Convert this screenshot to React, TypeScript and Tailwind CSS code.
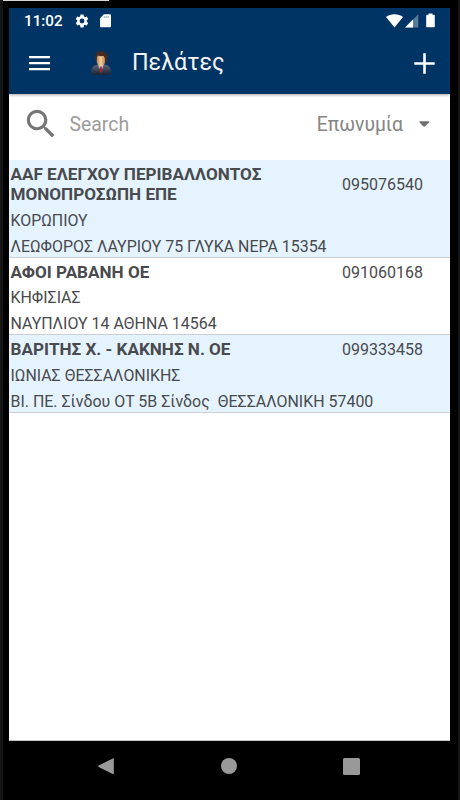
import type { ReactNode } from 'react';

type Customer = {
  name: string[];
  vat: string;
  taxOffice: string;
  address: string;
};

const customers: Customer[] = [
  {
    name: ['AAF ΕΛΕΓΧΟΥ ΠΕΡΙΒΑΛΛΟΝΤΟΣ', 'ΜΟΝΟΠΡΟΣΩΠΗ ΕΠΕ'],
    vat: '095076540',
    taxOffice: 'ΚΟΡΩΠΙΟΥ',
    address: 'ΛΕΩΦΟΡΟΣ ΛΑΥΡΙΟΥ 75 ΓΛΥΚΑ ΝΕΡΑ 15354',
  },
  {
    name: ['ΑΦΟΙ ΡΑΒΑΝΗ ΟΕ'],
    vat: '091060168',
    taxOffice: 'ΚΗΦΙΣΙΑΣ',
    address: 'ΝΑΥΠΛΙΟΥ 14 ΑΘΗΝΑ 14564',
  },
  {
    name: ['ΒΑΡΙΤΗΣ Χ. - ΚΑΚΝΗΣ Ν. ΟΕ'],
    vat: '099333458',
    taxOffice: 'ΙΩΝΙΑΣ ΘΕΣΣΑΛΟΝΙΚΗΣ',
    address: 'ΒΙ. ΠΕ. Σίνδου ΟΤ 5Β Σίνδος  ΘΕΣΣΑΛΟΝΙΚΗ 57400',
  },
];

function Icon({
  className,
  box = '0 0 24 24',
  children,
}: {
  className: string;
  box?: string;
  children: ReactNode;
}) {
  return (
    <svg viewBox={box} className={`block shrink-0 ${className}`} fill="currentColor">
      {children}
    </svg>
  );
}

function StatusBar() {
  return (
    <div className="flex h-[25px] items-center pl-[15px] pr-[15px] text-white">
      <span className="w-[50px] pt-[2px] text-[15.200px] leading-[25px] font-medium">11:02</span>
      <Icon className="size-4">
        <path d="M19.14 12.94c.04-.3.06-.61.06-.94 0-.32-.02-.64-.07-.94l2.03-1.58a.49.49 0 0 0 .12-.61l-1.92-3.32a.49.49 0 0 0-.59-.22l-2.39.96c-.5-.38-1.03-.7-1.62-.94l-.36-2.54a.48.48 0 0 0-.48-.41h-3.84a.47.47 0 0 0-.47.41l-.36 2.54c-.59.24-1.13.57-1.62.94l-2.39-.96a.48.48 0 0 0-.59.22L2.74 8.87a.47.47 0 0 0 .12.61l2.03 1.58c-.05.3-.09.63-.09.94s.02.64.07.94l-2.03 1.58a.49.49 0 0 0-.12.61l1.92 3.32c.12.22.37.29.59.22l2.39-.96c.5.38 1.03.7 1.62.94l.36 2.54c.05.24.24.41.48.41h3.84c.24 0 .44-.17.47-.41l.36-2.54c.59-.24 1.13-.56 1.62-.94l2.39.96c.22.08.47 0 .59-.22l1.92-3.32a.47.47 0 0 0-.12-.61zM12 15.6A3.6 3.6 0 1 1 12 8.4a3.6 3.6 0 0 1 0 7.2z" />
      </Icon>
      <Icon className="ml-2.5 h-[14px] w-[11px]" box="0 0 11 14">
        <path d="M4 .3h6A1 1 0 0 1 11 1.300v11a1 1 0 0 1-1 1H1a1 1 0 0 1-1-1V4.300z" />
        <path d="M4.200 2v2M6.200 2v2M8.200 2v2" stroke="#003464" strokeWidth=".7" opacity=".6" />
      </Icon>
      <div className="ml-auto flex items-center">
        <Icon className="h-[14px] w-[17px]" box="0 0 17 14">
          <path d="M8.500 13.500 0 2.900C2.300 1.200 5.200.3 8.500.3s6.200.9 8.500 2.600z" />
        </Icon>
        <Icon className="ml-[2px] h-[14px] w-[14px]" box="0 0 14 14">
          <path d="M13.300.2v13.300H0z" opacity=".35" />
          <path d="M8 5.500v8H0z" />
        </Icon>
        <Icon className="ml-[7px] h-[15px] w-[9px]" box="0 0 9 15">
          <path d="M2.500.5h4v1.300H8a.8.8 0 0 1 .8.8v10.900a.8.8 0 0 1-.8.8H1a.8.8 0 0 1-.8-.8V2.600A.8.8 0 0 1 1 1.800h1.500z" />
        </Icon>
      </div>
    </div>
  );
}

function Avatar() {
  return (
    <svg viewBox="0 0 22 26" className="ml-[40px] h-[26px] w-[22px] shrink-0">
      <defs>
        <linearGradient id="suit" x1="0" y1="0" x2="0" y2="1">
          <stop offset="0" stopColor="#5c6678" />
          <stop offset="1" stopColor="#1b2130" />
        </linearGradient>
        <linearGradient id="face" x1="0" y1="0" x2="1" y2="0">
          <stop offset="0" stopColor="#b9824f" />
          <stop offset=".5" stopColor="#f3d29c" />
          <stop offset="1" stopColor="#a9744b" />
        </linearGradient>
      </defs>
      <path d="M1.200 24c-.3-5 .6-8 5.800-9.200h8.500c4.700 1.200 5.800 4.200 5.500 9.200-3 1.300-17 1.300-19.800 0z" fill="url(#suit)" />
      <path d="M8 14.500 11 22.500l2.800-8z" fill="#b9bac6" />
      <path d="m10.300 16.500-.6 4.500 1.300 2 1.300-2-.6-4.500z" fill="#a8202c" />
      <ellipse cx="11" cy="10" rx="4.500" ry="6.300" fill="url(#face)" />
      <path d="M5.700 10.500C4.200 5 6.500 1.500 11 1.300c5.500-.1 7.500 3.500 6 9.700-.3 1.800-.9 2.800-2 3.300.6-3.500.3-6.800-1.500-8.300-2 .3-4 .2-5.700-.6-1.300 1.300-1 3.100-1.300 6.100z" fill="#4a2b1c" />
    </svg>
  );
}

function AppBar() {
  return (
    <div className="flex h-[60px] items-center pl-[19.500px] pr-[15px] text-white">
      <Icon className="h-[16px] w-[21px]" box="0 0 21 16">
        <path d="M0 1h21v2.200H0zM0 7h21v2.200H0zM0 13h21v2.200H0z" />
      </Icon>
      <Avatar />
      <h1 className="ml-[20.500px] pb-[3px] text-[23.300px] leading-8 text-[#f4f4f4]">Πελάτες</h1>
      <Icon className="ml-auto size-[21px]" box="0 0 21 21">
        <path d="M9.200.300h2.600v8.900h8.900v2.600h-8.900v8.900H9.200v-8.900H.300V9.200h8.900z" />
      </Icon>
    </div>
  );
}

function SearchBar() {
  return (
    <div className="flex h-[66px] items-center pl-[13px] pr-[20px] pb-[6px]">
      <Icon className="size-[38px] text-[#757575]">
        <path d="M15.500 14h-.79l-.28-.27A6.471 6.471 0 0 0 16 9.500 6.500 6.500 0 1 0 9.500 16c1.610 0 3.090-.59 4.230-1.570l.27.28v.79l5 4.990L20.490 19l-4.990-5zm-6 0C7.010 14 5 11.990 5 9.500S7.010 5 9.500 5 14 7.010 14 9.500 11.990 14 9.500 14z" />
      </Icon>
      <span className="ml-[9.500px] pt-[2px] text-[19.400px] leading-6 text-[#9c9c9c]">Search</span>
      <span className="ml-auto pt-[2px] text-[19.300px] leading-6 text-[#858585]">Επωνυμία</span>
      <Icon className="ml-[16px] h-[6px] w-[11px] text-[#6f6f6f]" box="0 0 11 6">
        <path d="M.9.300h8.700q1 .3.300 1.200L6.500 5.100Q5.200 6.200 4 5.100L.6 1.500Q0 .6.900.3z" />
      </Icon>
    </div>
  );
}

function CustomerRow({ customer }: { customer: Customer }) {
  return (
    <li className="border-b border-[#cbced2] pl-[1.500px] text-[#484a4e] odd:bg-[#e5f3ff]">
      <div className="flex items-center justify-between pt-[4px] pb-[3.500px] pr-[27px]">
        <h2 className="text-[17.100px] leading-[20px] font-bold">
          {customer.name.map((line) => (
            <span className="block whitespace-nowrap" key={line}>
              {line}
            </span>
          ))}
        </h2>
        <span className="pt-px text-[16px] leading-[19px]">{customer.vat}</span>
      </div>
      <p className="text-[15.920px] leading-[26px]">{customer.taxOffice}</p>
      <p className="-mb-[2px] text-[15.950px] leading-[25px] whitespace-pre">{customer.address}</p>
    </li>
  );
}

function NavBar() {
  return (
    <div className="flex h-[50px] items-center text-[#999999]">
      <Icon className="ml-[89px] h-[18px] w-[16px]" box="0 0 16 18">
        <path d="M15.800.900v16.500L.6 9.900Q0 9.200.6 8.500z" />
      </Icon>
      <div className="ml-[107px] size-4 rounded-full bg-[#999999]" />
      <div className="ml-[106px] size-[17px] rounded-[1.500px] bg-[#999999]" />
    </div>
  );
}

export default function App() {
  return (
    <div className="h-[800px] w-[460px] overflow-hidden border-l-[3px] border-r-2 border-[#151515] bg-black font-[Roboto,sans-serif]">
      <div className="-ml-[3px] h-[8px]">
        <div className="h-px w-[109px] bg-[#d4d8d4]" />
      </div>
      <div className="ml-[6px] w-[441px]">
        <header className="relative h-[86px] bg-[#003464] shadow-[0_1px_3px_rgba(0,0,0,0.35)]">
          <StatusBar />
          <AppBar />
        </header>
        <main className="h-[647px] border-b border-[#c4c4c4] bg-white">
          <SearchBar />
          <ul>
            {customers.map((customer) => (
              <CustomerRow customer={customer} key={customer.vat} />
            ))}
          </ul>
        </main>
        <NavBar />
      </div>
    </div>
  );
}
